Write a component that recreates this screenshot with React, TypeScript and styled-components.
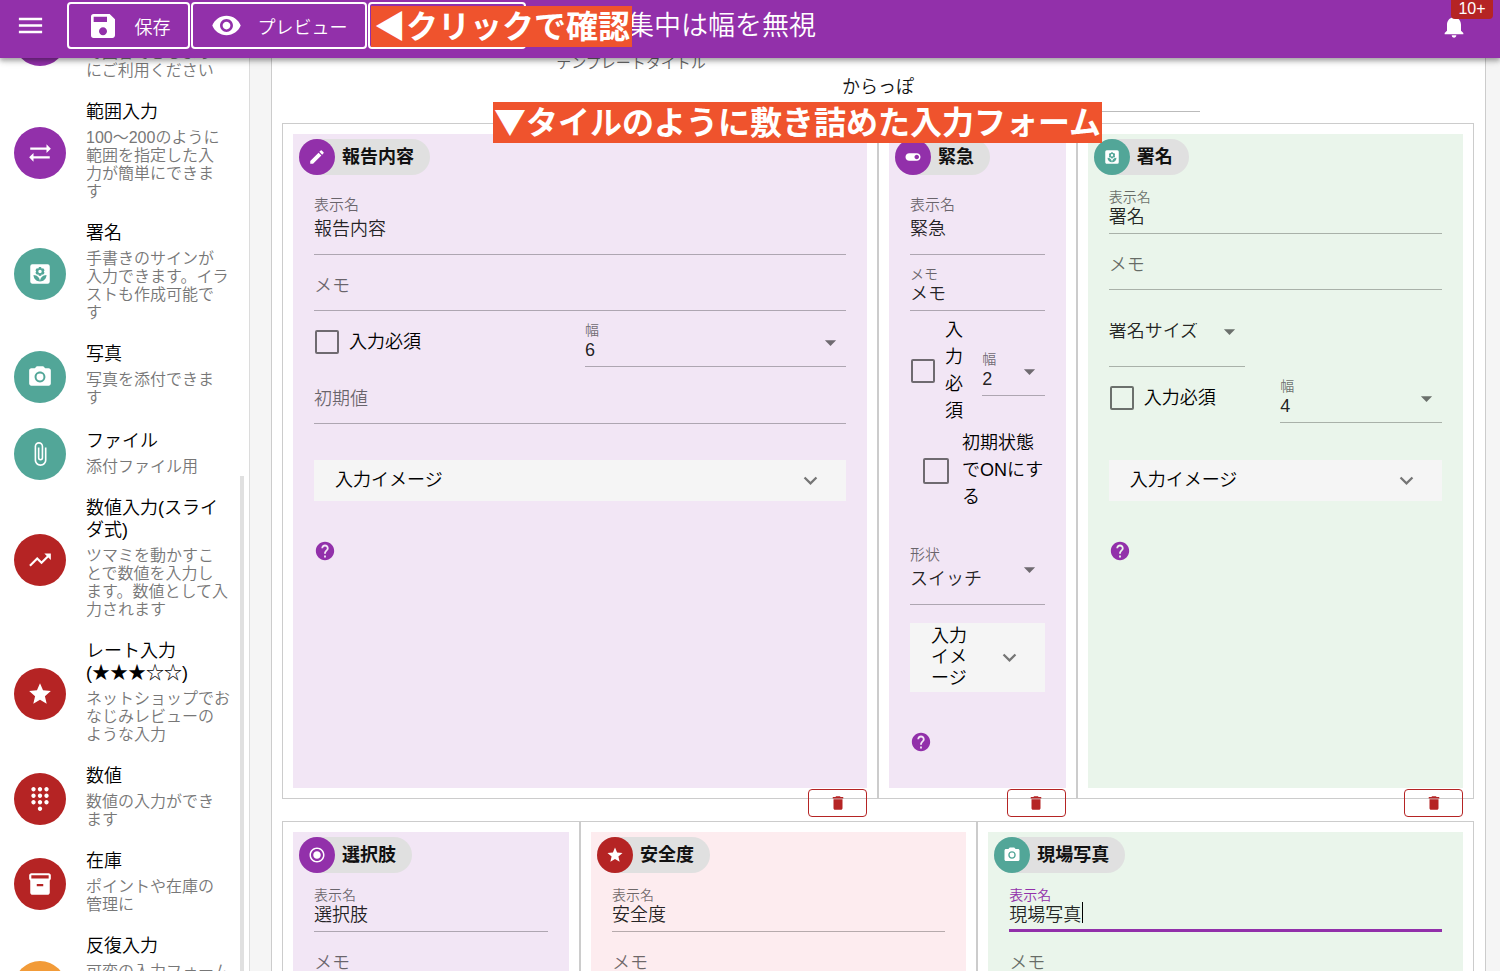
import React from "react";
import styled, { createGlobalStyle, css } from "styled-components";
import {
  MdMenu,
  MdSave,
  MdVisibility,
  MdNotifications,
  MdEdit,
  MdToggleOn,
  MdCameraAlt,
  MdAttachFile,
  MdTrendingUp,
  MdStar,
  MdDialpad,
  MdArrowDropDown,
  MdKeyboardArrowDown,
  MdHelp,
  MdDelete,
  MdRadioButtonChecked,
  MdSyncAlt,
} from "react-icons/md";

const PURPLE = "#9230aa";
const TEAL = "#52a698";
const RED = "#b52424";
const ORANGE = "#f29b38";

const GlobalStyle = createGlobalStyle`
  *, *::before, *::after { box-sizing: border-box; }
  body {
    margin: 0;
    background: #f5f5f5;
    color: #111;
    font-family: "Liberation Sans", "Noto Sans CJK JP", sans-serif;
    font-weight: 350;
  }
  button, input, select { font: inherit; color: inherit; }
  svg { display: block; flex: none; }
`;

const Page = styled.div`
  position: relative;
  display: flex;
  flex-direction: column;
  height: 100vh;
  overflow: hidden;
`;

const Header = styled.header`
  position: relative;
  z-index: 2;
  display: flex;
  align-items: center;
  flex: none;
  height: 58px;
  padding: 0 32px 7px 15px;
  background: ${PURPLE};
  color: #fff;
  box-shadow: 0 2px 4px rgba(0, 0, 0, 0.2), 0 4px 5px rgba(0, 0, 0, 0.14),
    0 1px 10px rgba(0, 0, 0, 0.12);
`;

const IconButton = styled.button`
  display: flex;
  padding: 0;
  border: 0;
  background: none;
`;

const MenuButton = styled(IconButton)`
  margin-right: 21px;
`;

const ToolButton = styled.button<{ $width: number }>`
  display: flex;
  align-items: center;
  justify-content: center;
  gap: 16px;
  width: ${(p) => p.$width}px;
  height: 47px;
  margin-right: 1px;
  padding: 0;
  border: 2px solid #fff;
  border-radius: 4px;
  background: none;
  font-size: 18px;
`;

const HeaderTitle = styled.h1`
  flex: 1;
  margin: 0 0 0 100px;
  font-size: 27px;
  font-weight: inherit;
  line-height: 40px;
`;

const Bell = styled(IconButton)`
  position: relative;
`;

const Badge = styled.span`
  position: absolute;
  left: 11px;
  top: -16px;
  width: 42px;
  padding: 4px 0 1px;
  border-radius: 4px;
  background: ${RED};
  font-size: 16px;
  line-height: 18px;
  text-align: center;
`;

const Callout = styled.div`
  position: absolute;
  z-index: 3;
  padding: 0 2px 4px 3px;
  background: #ef532d;
  color: #fff;
  font-size: 32px;
  font-weight: 700;
  line-height: 37px;
  white-space: nowrap;
  font-family: "Noto Sans CJK JP", sans-serif;
`;

const HeaderCallout = styled(Callout)`
  left: 371px;
  top: 6px;
`;

const FormCallout = styled(Callout)`
  left: 493px;
  top: 102px;
  padding: 0 1px 4px;
`;

const Body = styled.div`
  display: flex;
  flex: 1;
  min-height: 0;
`;

const Sidebar = styled.nav`
  position: relative;
  flex: none;
  width: 250px;
  overflow: hidden;
  border-right: 1px solid #dcdcdc;
  background: #fff;
`;

const ScrollThumb = styled.div`
  position: absolute;
  right: 5px;
  top: 418px;
  bottom: 0;
  width: 4px;
  background: #e0e0e0;
`;

const PartList = styled.ul`
  margin: -71px 0 0;
  padding: 0;
  list-style: none;
`;

const PartItem = styled.li`
  display: flex;
  align-items: center;
  gap: 20px;
  min-height: 69px;
  padding: 0 20px 0 14px;

  &:first-child {
    min-height: 105px;
  }
`;

const Avatar = styled.span<{ $color: string; $size: number }>`
  display: flex;
  align-items: center;
  justify-content: center;
  flex: none;
  width: ${(p) => p.$size}px;
  height: ${(p) => p.$size}px;
  border-radius: 50%;
  background: ${(p) => p.$color};
  color: #fff;
`;

const PartText = styled.div`
  flex: 1;
  align-self: flex-end;
  padding: 9px 0 12px;
`;

const PartName = styled.div`
  margin-bottom: 6px;
  color: #000;
  font-size: 18px;
  line-height: 22px;
`;

const PartNote = styled.div`
  color: #777;
  font-size: 16px;
  line-height: 18px;
  white-space: pre;
`;

const Main = styled.main`
  flex: 1;
  display: flex;
  min-width: 0;
  padding: 0 14px 0 21px;
  overflow: hidden;
`;

const Panel = styled.div`
  flex: 1;
  min-width: 0;
  height: max-content;
  min-height: 100%;
  padding: 0 11px 0 10px;
  border: solid #ccc;
  border-width: 0 1px;
  background: #fff;
`;

const TitleField = styled.label`
  display: block;
  width: 54%;
  margin: -4px auto 11px;
  border-bottom: 1px solid #bbb;
  color: #666;
  font-size: 15px;
  line-height: 17px;
`;

const TitleInput = styled.input`
  display: block;
  width: 100%;
  height: 40px;
  padding: 0 0 12px;
  border: 0;
  outline: 0;
  background: none;
  color: #111;
  font-size: 18px;
  text-align: center;
`;

const Row = styled.section`
  display: grid;
  grid-template-columns: repeat(12, 1fr);
  margin-bottom: 22px;
`;

const Cell = styled.article<{ $span: number }>`
  position: relative;
  display: flex;
  grid-column: span ${(p) => p.$span};
  min-width: 0;
  padding: 10px;
  border: 1px solid #ccc;
`;

const Tile = styled.div<{ $tint: string }>`
  flex: 1;
  min-width: 0;
  padding: 5px 21px 35px;
  background: ${(p) => p.$tint};
`;

const Chip = styled.h2`
  display: flex;
  align-items: center;
  gap: 7px;
  width: max-content;
  height: 36px;
  margin: 0 0 3px -15px;
  padding-right: 16px;
  border-radius: 18px;
  background: #e0e0e0;
  font-size: 18px;
  font-weight: 700;
  line-height: 36px;
`;

const Field = styled.label<{ $tall?: boolean; $focused?: boolean }>`
  position: relative;
  display: flex;
  flex-direction: column;
  height: ${(p) => (p.$tall ? 77 : 56)}px;
  padding-top: ${(p) => (p.$tall ? 19 : 11)}px;
  border-bottom: 1px solid rgba(0, 0, 0, 0.28);
  color: rgba(0, 0, 0, 0.56);
  font-size: ${(p) => (p.$tall ? 15 : 14)}px;
  line-height: 16px;
  ${(p) =>
    p.$focused &&
    css`
      border-bottom: 3px solid ${PURPLE};
      color: ${PURPLE};
    `}
`;

const SmallSelectField = styled(Field)`
  width: 136px;
  padding-top: 11px;
`;

const inputLook = css`
  width: 100%;
  padding: 0;
  border: 0;
  outline: 0;
  background: none;
  color: rgba(0, 0, 0, 0.87);
  font-size: 18px;
  appearance: none;
  text-overflow: ellipsis;
`;

const TextInput = styled.input<{ $tall?: boolean }>`
  ${inputLook}
  height: ${(p) => (p.$tall ? 28 : 20)}px;
  &::placeholder {
    color: rgba(0, 0, 0, 0.56);
    opacity: 1;
  }
`;

const BareInput = styled(TextInput)`
  height: 40px;
`;

const Select = styled.select<{ $tall?: boolean }>`
  ${inputLook}
  height: ${(p) => (p.$tall ? 32 : 24)}px;
`;

const BareSelect = styled(Select)`
  height: 60px;
`;

const Arrow = styled(MdArrowDropDown)<{ $tall?: boolean }>`
  position: absolute;
  right: 2px;
  top: ${(p) => (p.$tall ? 28 : 18)}px;
  color: rgba(0, 0, 0, 0.54);
  pointer-events: none;
`;

const Caret = styled.span`
  position: absolute;
  left: 73px;
  top: 26px;
  width: 1px;
  height: 21px;
  background: #000;
`;

const Pair = styled.div`
  display: grid;
  grid-template-columns: 1fr 1fr;
  align-items: center;
  gap: 10px;
  margin-bottom: 1px;
`;

const CheckLabel = styled.label<{ $indent?: boolean }>`
  display: flex;
  align-items: center;
  gap: ${(p) => (p.$indent ? 13 : 10)}px;
  padding: ${(p) => (p.$indent ? "4px 0 17px 13px" : "6px 0 0 1px")};
  color: #000;
  font-size: 18px;
  line-height: 27px;
  line-break: anywhere;
`;

const Checkbox = styled.input<{ $size: number }>`
  flex: none;
  width: ${(p) => p.$size}px;
  height: ${(p) => p.$size}px;
  margin: 0;
  border: 2px solid rgba(0, 0, 0, 0.54);
  border-radius: 2px;
  appearance: none;
`;

const Expansion = styled.button<{ $gap: number }>`
  display: flex;
  align-items: center;
  justify-content: space-between;
  gap: 18px;
  width: 100%;
  min-height: 41px;
  margin-top: ${(p) => p.$gap}px;
  padding: 3px 22px 3px 21px;
  border: 0;
  background: #f5f5f5;
  color: #000;
  font-size: 18px;
  line-height: 21px;
  text-align: left;
  line-break: anywhere;
  svg {
    color: #757575;
  }
`;

const HelpButton = styled(IconButton)`
  margin-top: 39px;
  color: ${PURPLE};
`;

const DeleteButton = styled.button`
  position: absolute;
  right: 10px;
  bottom: -19px;
  z-index: 1;
  display: flex;
  align-items: center;
  justify-content: center;
  width: 59px;
  height: 28px;
  padding: 0;
  border: 1px solid ${RED};
  border-radius: 4px;
  background: none;
  color: ${RED};
`;

type IconType = React.ComponentType<{ size?: number }>;

const Archive: IconType = ({ size = 24 }) => (
  <svg width={size} height={size} viewBox="0 0 24 24" fill="currentColor">
    <path
      fillRule="evenodd"
      d="M20 2H4c-1 0-2 .9-2 2v3.01c0 .72.43 1.34 1 1.69V20c0 1.100 1.100 2 2 2h14c.9 0 2-.9 2-2V8.700c.57-.35 1-.97 1-1.690V4c0-1.100-1-2-2-2zm-5 12H9v-2h6v2zm5-7H4V4h16v3z"
    />
  </svg>
);

const Florist: IconType = ({ size = 24 }) => (
  <svg width={size} height={size} viewBox="0 0 24 24" fill="currentColor">
    <path
      fillRule="evenodd"
      d="M19 3H5a2 2 0 0 0-2 2v14c0 1.100.9 2 2 2h14a2 2 0 0 0 2-2V5a2 2 0 0 0-2-2zM12 5.600c.85 0 1.540.65 1.620 1.480a1.620 1.620 0 0 1 1.880 2.620 1.620 1.620 0 0 1-1.880 2.620 1.620 1.620 0 0 1-3.240 0A1.620 1.620 0 0 1 8.500 9.700a1.620 1.620 0 0 1 1.880-2.620C10.460 6.250 11.150 5.600 12 5.600zm0 2.500a1.600 1.600 0 1 0 0 3.200 1.600 1.600 0 0 0 0-3.200zM12 19c-3.310 0-6-2.690-6-6 3.310 0 6 2.690 6 6 0-3.310 2.690-6 6-6 0 3.310-2.690 6-6 6z"
    />
  </svg>
);

interface Part {
  name?: string;
  note: string;
  color: string;
  icon: IconType;
}

const PARTS: Part[] = [
  { note: "で回答できるよう\nにご利用ください", color: PURPLE, icon: MdRadioButtonChecked },
  { name: "範囲入力", note: "100〜200のように\n範囲を指定した入\n力が簡単にできま\nす", color: PURPLE, icon: MdSyncAlt },
  { name: "署名", note: "手書きのサインが\n入力できます。イラ\nストも作成可能で\nす", color: TEAL, icon: Florist },
  { name: "写真", note: "写真を添付できま\nす", color: TEAL, icon: MdCameraAlt },
  { name: "ファイル", note: "添付ファイル用", color: TEAL, icon: MdAttachFile },
  { name: "数値入力(スライダ式)", note: "ツマミを動かすこ\nとで数値を入力し\nます。数値として入\n力されます", color: RED, icon: MdTrendingUp },
  { name: "レート入力(★★★☆☆)", note: "ネットショップでお\nなじみレビューの\nような入力", color: RED, icon: MdStar },
  { name: "数値", note: "数値の入力ができ\nます", color: RED, icon: MdDialpad },
  { name: "在庫", note: "ポイントや在庫の\n管理に", color: RED, icon: Archive },
  { name: "反復入力", note: "可変の入力フォーム\n\n\n\n", color: ORANGE, icon: MdSyncAlt },
];

const LILAC = "#f2e6f5";
const MINT = "#eaf5eb";
const PINK = "#fdecef";

function TileChip({ icon: Icon, color, children }: { icon: IconType; color: string; children: React.ReactNode }) {
  return (
    <Chip>
      <Avatar $color={color} $size={36}>
        <Icon size={18} />
      </Avatar>
      {children}
    </Chip>
  );
}

function TextField({ label, value, tall, focused }: { label: string; value: string; tall?: boolean; focused?: boolean }) {
  return (
    <Field $tall={tall} $focused={focused}>
      {label}
      <TextInput $tall={tall} defaultValue={value} />
      {focused && <Caret />}
    </Field>
  );
}

function EmptyField({ label }: { label: string }) {
  return (
    <Field>
      <BareInput placeholder={label} aria-label={label} />
    </Field>
  );
}

function SelectField({ label, value, tall }: { label: string; value: string; tall?: boolean }) {
  return (
    <Field $tall={tall}>
      {label}
      <Select $tall={tall} defaultValue={value}>
        <option>{value}</option>
      </Select>
      <Arrow size={27} $tall={tall} />
    </Field>
  );
}

function RequiredAndWidth({ width }: { width: string }) {
  return (
    <Pair>
      <CheckLabel>
        <Checkbox type="checkbox" $size={24} />
        入力必須
      </CheckLabel>
      <SelectField label="幅" value={width} />
    </Pair>
  );
}

function ImageAndHelp({ gap }: { gap: number }) {
  return (
    <>
      <Expansion type="button" $gap={gap}>
        入力イメージ
        <MdKeyboardArrowDown size={27} />
      </Expansion>
      <HelpButton type="button" aria-label="ヘルプ">
        <MdHelp size={22} />
      </HelpButton>
    </>
  );
}

function Delete() {
  return (
    <DeleteButton type="button" aria-label="削除">
      <MdDelete size={18} />
    </DeleteButton>
  );
}

export default function App() {
  return (
    <Page>
      <GlobalStyle />
      <Header>
        <MenuButton type="button" aria-label="メニュー">
          <MdMenu size={31} />
        </MenuButton>
        <ToolButton type="button" $width={123}>
          <MdSave size={32} />
          保存
        </ToolButton>
        <ToolButton type="button" $width={176}>
          <MdVisibility size={31} />
          プレビュー
        </ToolButton>
        <ToolButton type="button" aria-label="確認" $width={158} />
        <HeaderTitle>集中は幅を無視</HeaderTitle>
        <Bell type="button" aria-label="通知">
          <MdNotifications size={28} />
          <Badge>10+</Badge>
        </Bell>
      </Header>
      <HeaderCallout>◀クリックで確認</HeaderCallout>
      <FormCallout>▼タイルのように敷き詰めた入力フォーム</FormCallout>

      <Body>
        <Sidebar>
          <PartList>
            {PARTS.map(({ name, note, color, icon: Icon }) => (
              <PartItem key={note}>
                <Avatar $color={color} $size={52}>
                  <Icon size={26} />
                </Avatar>
                <PartText>
                  {name && <PartName>{name}</PartName>}
                  <PartNote>{note}</PartNote>
                </PartText>
              </PartItem>
            ))}
          </PartList>
          <ScrollThumb />
        </Sidebar>

        <Main>
          <Panel>
            <TitleField>
              テンプレートタイトル
              <TitleInput defaultValue="からっぽ" />
            </TitleField>

            <Row>
              <Cell $span={6}>
                <Tile $tint={LILAC}>
                  <TileChip icon={MdEdit} color={PURPLE}>報告内容</TileChip>
                  <TextField tall label="表示名" value="報告内容" />
                  <EmptyField label="メモ" />
                  <RequiredAndWidth width="6" />
                  <EmptyField label="初期値" />
                  <ImageAndHelp gap={36} />
                </Tile>
                <Delete />
              </Cell>
              <Cell $span={2}>
                <Tile $tint={LILAC}>
                  <TileChip icon={MdToggleOn} color={PURPLE}>緊急</TileChip>
                  <TextField tall label="表示名" value="緊急" />
                  <TextField label="メモ" value="メモ" />
                  <RequiredAndWidth width="2" />
                  <CheckLabel $indent>
                    <Checkbox type="checkbox" $size={26} />
                    初期状態でONにする
                  </CheckLabel>
                  <SelectField tall label="形状" value="スイッチ" />
                  <ImageAndHelp gap={18} />
                </Tile>
                <Delete />
              </Cell>
              <Cell $span={4}>
                <Tile $tint={MINT}>
                  <TileChip icon={Florist} color={TEAL}>署名</TileChip>
                  <TextField label="表示名" value="署名" />
                  <EmptyField label="メモ" />
                  <SmallSelectField $tall>
                    <BareSelect aria-label="署名サイズ" defaultValue="署名サイズ">
                      <option>署名サイズ</option>
                    </BareSelect>
                    <Arrow size={27} $tall />
                  </SmallSelectField>
                  <RequiredAndWidth width="4" />
                  <ImageAndHelp gap={37} />
                </Tile>
                <Delete />
              </Cell>
            </Row>

            <Row>
              <Cell $span={3}>
                <Tile $tint={LILAC}>
                  <TileChip icon={MdRadioButtonChecked} color={PURPLE}>選択肢</TileChip>
                  <TextField label="表示名" value="選択肢" />
                  <EmptyField label="メモ" />
                </Tile>
              </Cell>
              <Cell $span={4}>
                <Tile $tint={PINK}>
                  <TileChip icon={MdStar} color={RED}>安全度</TileChip>
                  <TextField label="表示名" value="安全度" />
                  <EmptyField label="メモ" />
                </Tile>
              </Cell>
              <Cell $span={5}>
                <Tile $tint={MINT}>
                  <TileChip icon={MdCameraAlt} color={TEAL}>現場写真</TileChip>
                  <TextField focused label="表示名" value="現場写真" />
                  <EmptyField label="メモ" />
                </Tile>
              </Cell>
            </Row>
          </Panel>
        </Main>
      </Body>
    </Page>
  );
}
